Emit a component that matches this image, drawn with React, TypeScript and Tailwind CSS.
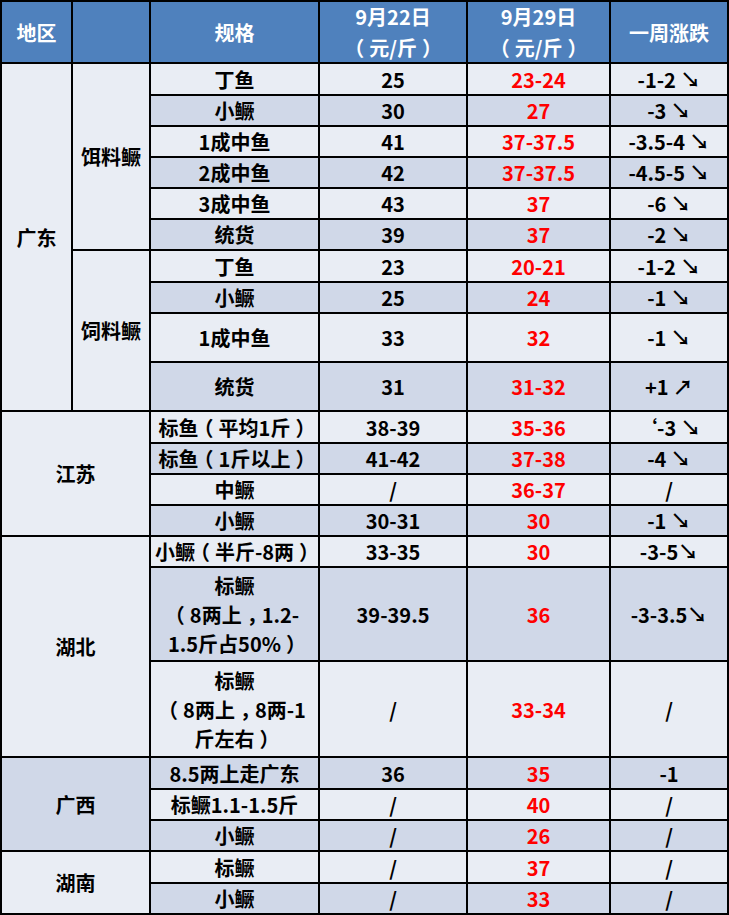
import React from "react";

const L = "bg-[#E9EDF4]";
const D = "bg-[#D0D8E8]";
const H = "bg-[#4F81BD] text-white whitespace-nowrap";

type Row = { spec: string; a: string; b: string; c: string };

// Centre full-width punctuation inside its em box, as the reference font does.
const fmt = (s: string) => {
  const lines = s.split("\n");
  return lines.map((line, li) => {
    const chars = Array.from(line);
    return (
      <React.Fragment key={li}>
        {li > 0 && <br />}
        {chars.map((ch, i) => {
          const next = chars[i + 1];
          if (ch === "（")
            return (
              <span key={i} className={i === 0 ? "ml-[-5px] mr-[5px]" : "mr-[5px]"}>
                （
              </span>
            );
          if (ch === "）" || ch === "，")
            return (
              <span key={i} className="ml-[5px] tracking-[-5px]">
                {ch}
              </span>
            );
          if (next === "（")
            return (
              <span key={i} className="tracking-[-5px]">
                {ch}
              </span>
            );
          return <React.Fragment key={i}>{ch}</React.Fragment>;
        })}
      </React.Fragment>
    );
  });
};

const Cell = ({ cls, children, span }: { cls: string; children?: React.ReactNode; span?: string }) => (
  <div className={`flex items-center justify-center text-center leading-[29px] ${cls} ${span ?? ""}`}>
    <div>{children}</div>
  </div>
);

export default function App() {
  const dataRows: { region?: { text: string; cls: string; span: string }; group?: { text: string; span: string }; row: Row }[] = [
    { region: { text: "广东", cls: L, span: "row-span-10" }, group: { text: "饵料鳜", span: "row-span-6" }, row: { spec: "丁鱼", a: "25", b: "23-24", c: "-1-2 ↘" } },
    { row: { spec: "小鳜", a: "30", b: "27", c: "-3 ↘" } },
    { row: { spec: "1成中鱼", a: "41", b: "37-37.5", c: "-3.5-4 ↘" } },
    { row: { spec: "2成中鱼", a: "42", b: "37-37.5", c: "-4.5-5 ↘" } },
    { row: { spec: "3成中鱼", a: "43", b: "37", c: "-6 ↘" } },
    { row: { spec: "统货", a: "39", b: "37", c: "-2 ↘" } },
    { group: { text: "饲料鳜", span: "row-span-4" }, row: { spec: "丁鱼", a: "23", b: "20-21", c: "-1-2 ↘" } },
    { row: { spec: "小鳜", a: "25", b: "24", c: "-1 ↘" } },
    { row: { spec: "1成中鱼", a: "33", b: "32", c: "-1 ↘" } },
    { row: { spec: "统货", a: "31", b: "31-32", c: "+1 ↗" } },
    { region: { text: "江苏", cls: L, span: "col-span-2 row-span-4" }, row: { spec: "标鱼（平均1斤）", a: "38-39", b: "35-36", c: "‘-3 ↘" } },
    { row: { spec: "标鱼（1斤以上）", a: "41-42", b: "37-38", c: "-4 ↘" } },
    { row: { spec: "中鳜", a: "/", b: "36-37", c: "/" } },
    { row: { spec: "小鳜", a: "30-31", b: "30", c: "-1 ↘" } },
    { region: { text: "湖北", cls: L, span: "col-span-2 row-span-3" }, row: { spec: "小鳜（半斤-8两）", a: "33-35", b: "30", c: "-3-5↘" } },
    { row: { spec: "标鳜\n（8两上，1.2-\n1.5斤占50%）", a: "39-39.5", b: "36", c: "-3-3.5↘" } },
    { row: { spec: "标鳜\n（8两上，8两-1\n斤左右）", a: "/", b: "33-34", c: "/" } },
    { region: { text: "广西", cls: D, span: "col-span-2 row-span-3" }, row: { spec: "8.5两上走广东", a: "36", b: "35", c: "-1" } },
    { row: { spec: "标鳜1.1-1.5斤", a: "/", b: "40", c: "/" } },
    { row: { spec: "小鳜", a: "/", b: "26", c: "/" } },
    { region: { text: "湖南", cls: L, span: "col-span-2 row-span-2" }, row: { spec: "标鳜", a: "/", b: "37", c: "/" } },
    { row: { spec: "小鳜", a: "/", b: "33", c: "/" } },
  ];

  return (
    <div className="w-[729px] h-[915px] bg-white">
      <div className="grid grid-cols-[69px_76px_167px_146px_141px_1fr] grid-rows-[60px_30px_29px_29px_29px_29px_29px_30px_29px_47px_47px_30px_29px_29px_29px_29px_92px_94px_30px_29px_29px_30px_29px] gap-[2px] p-[2px] bg-black font-['Noto_Sans_CJK_SC',sans-serif] font-bold text-[20px] text-black">
        <Cell cls={H}>地区</Cell>
        <Cell cls={H}></Cell>
        <Cell cls={H}>规格</Cell>
        <Cell cls={`${H} leading-[31px]`}>{fmt("9月22日\n（元/斤）")}</Cell>
        <Cell cls={`${H} leading-[31px]`}>{fmt("9月29日\n（元/斤）")}</Cell>
        <Cell cls={H}>一周涨跌</Cell>
        {dataRows.map((r, i) => {
          const bg = i % 2 === 0 ? L : D;
          return (
            <React.Fragment key={i}>
              {r.region && (
                <Cell cls={r.region.cls} span={r.region.span}>
                  {r.region.text}
                </Cell>
              )}
              {r.group && (
                <Cell cls={L} span={r.group.span}>
                  {r.group.text}
                </Cell>
              )}
              <Cell cls={`${bg} whitespace-nowrap`}>{fmt(r.row.spec)}</Cell>
              <Cell cls={bg}>{r.row.a}</Cell>
              <Cell cls={`${bg} text-[#FF0000]`}>{r.row.b}</Cell>
              <Cell cls={bg}>{r.row.c}</Cell>
            </React.Fragment>
          );
        })}
      </div>
    </div>
  );
}
